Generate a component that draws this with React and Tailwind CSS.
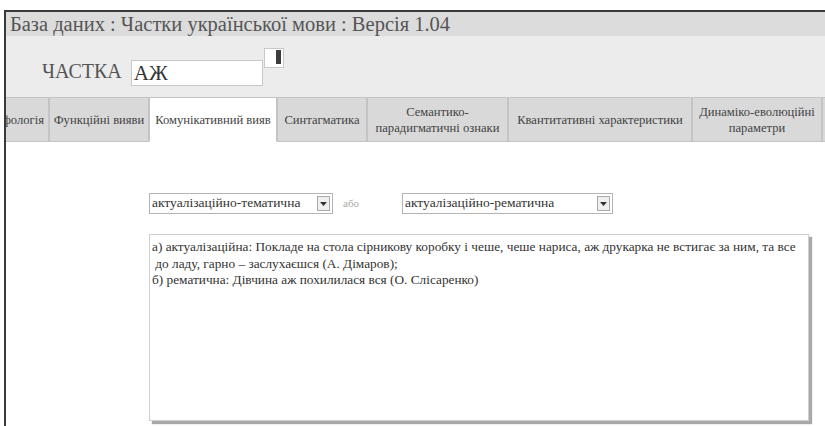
import React from "react";

function Tab({ children, active, className = "" }) {
  return (
    <div
      className={
        "h-full shrink-0 flex items-center justify-center text-center border border-[#c4c4c4] text-[12.6px] leading-[16px] text-[#444] whitespace-nowrap " +
        (active ? "bg-white border-b-white " : "bg-[#d9d9d9] ") +
        className
      }
    >
      {children}
    </div>
  );
}

function Select({ value, className = "" }) {
  return (
    <div
      className={
        "h-[21px] border border-[#b4b4b4] bg-white flex items-center justify-between pl-[2px] pr-[2px] " +
        className
      }
    >
      <span className="text-[13.5px] text-[#333] whitespace-nowrap">{value}</span>
      <span className="w-[13px] h-[15px] border border-[#aaa] bg-[#f0f0f0] flex items-center justify-center">
        <svg width="7" height="4" viewBox="0 0 7 4">
          <path d="M0 0h7L3.5 4z" fill="#333" />
        </svg>
      </span>
    </div>
  );
}

export default function App() {
  return (
    <div className="w-[825px] h-[426px] bg-white pt-[10px] pl-[4px] overflow-hidden font-['Liberation_Serif',serif]">
      <div className="h-full border-t-2 border-l-2 border-[#3a3a3a] flex flex-col">
        {/* title bar */}
        <div className="h-[24px] bg-[#dcdcdc] flex items-center pl-[4px] text-[20.5px] text-[#555] leading-none whitespace-nowrap">
          База даних : Частки української мови : Версія 1.04
        </div>

        {/* search header */}
        <div className="h-[61px] bg-[#ececec] flex items-start">
          <div className="ml-[36px] mt-[25px] text-[20px] text-[#555] leading-none">ЧАСТКА</div>
          <div className="ml-[9px] mt-[24px] w-[132px] h-[26px] bg-white border border-[#c8c8c8] flex items-center pl-[2px] text-[21px] text-[#333] leading-none">
            АЖ
          </div>
          <div className="mt-[12px] ml-[1px] w-[20px] h-[20px] bg-white border border-[#c8c8c8] flex justify-end items-start pt-[1px] pr-[2px]">
            <span className="w-[5px] h-[14px] bg-[#3c3c3c]" />
          </div>
        </div>

        {/* tab strip */}
        <div className="h-[45px] bg-[#ececec] flex overflow-hidden">
          <Tab className="w-[85px] -ml-[42px] justify-end pr-[4px]">Морфологія</Tab>
          <Tab className="w-[100px]">Функційні вияви</Tab>
          <Tab active className="w-[128px]">Комунікативний вияв</Tab>
          <Tab className="w-[90px]">Синтагматика</Tab>
          <Tab className="w-[141px]">
            Семантико-
            <br />
            парадигматичні ознаки
          </Tab>
          <Tab className="w-[184px]">Квантитативні характеристики</Tab>
          <Tab className="w-[130px]">
            Динаміко-еволюційні
            <br />
            параметри
          </Tab>
          <Tab className="w-[60px]" />
        </div>

        {/* tab body */}
        <div className="flex-1 bg-white pl-[143px]">
          <div className="mt-[51px] flex items-center">
            <Select value="актуалізаційно-тематична" className="w-[184px]" />
            <span className="ml-[10px] w-[59px] text-[11px] text-[#aaa]">або</span>
            <Select value="актуалізаційно-рематична" className="w-[211px]" />
          </div>
          <div className="mt-[20px] w-[660px] h-[187px] bg-white border border-[#cfcfcf] shadow-[3px_3px_1px_#a8a8a8] pl-[2px] pt-[4px] text-[13.3px] leading-[16.5px] text-[#333] whitespace-nowrap">
            <div>а) актуалізаційна: Покладе на стола сірникову коробку і чеше, чеше нариса, аж друкарка не встигає за ним, та все</div>
            <div>&nbsp;до ладу, гарно – заслухаєшся (А. Дімаров);</div>
            <div>б) рематична: Дівчина аж похилилася вся (О. Слісаренко)</div>
          </div>
        </div>
      </div>
    </div>
  );
}
